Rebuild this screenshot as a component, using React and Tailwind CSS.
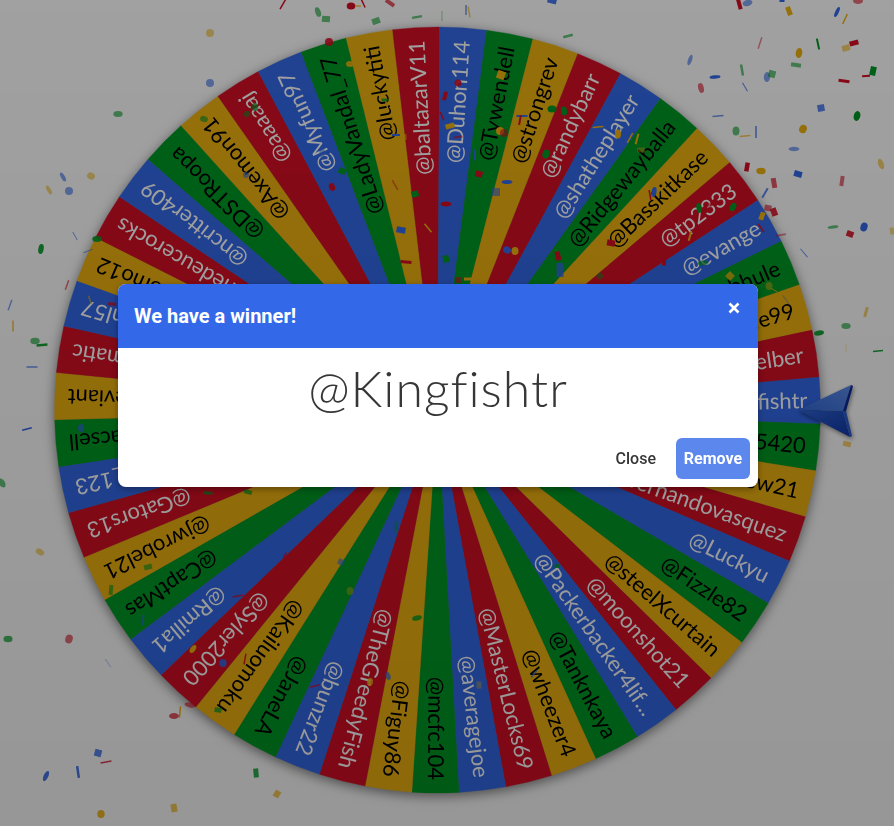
const CX = 437.5;
const CY = 410;
const R = 383;
const NAMES = [
  "@Kingfishtr", "@chrism5420", "@matthew21", "@fernandovasquez", "@Luckyu", "@Fizzle82", "@steelXcurtain", "@moonshot21",
  "@Packerbacker4lif...", "@Tanknkaya", "@wheezer4", "@MasterLocks69", "@averagejoe", "@mcfc104", "@Figuy86", "@TheGreedyFish",
  "@bunzr22", "@JaneLA", "@Kailuomoku", "@Syler2000", "@Rmilla1", "@CaptMas", "@jwrobel21", "@Gators13",
  "@david_123", "@jamiacsell", "@thedeviant", "@dramatic", "@quinnl57", "@tomo12", "@thedeucerocks", "@ncritter409",
  "@DSTRoopa", "@Axemon91", "@aaaaaj", "@Myfun97", "@LadyVandal_77", "@luckytiti", "@baltazarV11", "@Duhon114",
  "@Tywendell", "@strongrev", "@randybarr", "@shatheplayer", "@Ridgewayballa", "@Basskitkase", "@tp2333", "@evange",
  "@bhule", "@jamie99", "@weelber",
];
const COL = { b: "#3369e8", g: "#009925", y: "#eeb211", r: "#d50f25" };
const CYCLE = ["b", "g", "y", "r"];
const STEP = 360 / NAMES.length;
const START = -4.98;

function pt(a, r) {
  const t = (a * Math.PI) / 180;
  return [CX + r * Math.cos(t), CY + r * Math.sin(t)];
}

const BITS = [
  ["r",739,3,4,13,-15,"r",1],["e",747.5,3,5,3,-15,"b",.6],["r",782,0,5,4,0,"b",1],["r",789,11,5,9,-20,"y",1],["e",837,12,1.8,5.5,25,"b",1],
  ["r",845,19,1.5,11,25,"y",1],["e",858,1,5,3,0,"r",.6],["r",760,43,1.5,12,18,"r",.5],["r",818,44,2,11,-12,"g",1],["r",854,43,9,5,-15,"r",1],
  ["r",846,48,8,6,-15,"y",.6],["e",799,53,3.3,5,10,"y",1],["e",690,60,2,5.5,20,"b",.6],["r",796,65,10,4,8,"g",.6],["r",873,71,6,9,12,"g",1],
  ["r",866,76,8,2,-5,"r",1],["r",844,81,11,3,8,"r",1],["e",715,77,5.5,1.7,-5,"b",1],["r",742,70,2.5,11,-10,"g",.6],["e",767,77,3.2,5,5,"b",.6],
  ["r",772,74,7,7,15,"g",.6],["r",745,87,1,10,-30,"b",.8],["e",701,88,2.8,5,-15,"r",.6],["r",821,108,7,7,-10,"b",.8],["e",857,116,3.3,5,15,"g",1],
  ["r",718,116,1.5,11,85,"b",.7],["e",736,131,3.5,4.5,0,"g",.6],["r",745,136,1.5,11,85,"y",.7],["r",756,132,2,12,0,"b",.6],["e",803,129,3.8,4.3,20,"y",1],
  ["e",794,149,5.5,2.2,0,"b",.6],["e",881,164,2.8,5.5,-20,"y",.6],["r",747,167,4.5,9,10,"r",1],["e",761,171,4.7,3.3,0,"y",1],["r",798,174,8,6,15,"b",1],
  ["r",842,181,4,10,8,"r",.6],["r",774,183,5,10,-10,"r",.7],["r",765,193,2,11,30,"b",.8],["r",768,208,7,6,10,"r",.6],["r",774,212,6,8,-20,"r",.9],
  ["r",762,216,5,8,20,"y",1],["e",833,227,5.5,1.6,-8,"g",.6],["e",864,227,3.5,4.5,20,"b",1],["r",850,234,7,6,20,"r",.9],["r",892,231,4,7,-10,"y",.5],
  ["r",781,235,2,10,80,"r",.5],["r",804,253,1,11,-40,"b",.7],["e",733,207,3,4.5,30,"g",1],["e",699,208,2.5,5,-10,"g",1],["r",690,236,2,10,15,"y",1],
  ["e",703,263,5,2.5,-5,"g",.7],["r",708,207,5,8,40,"r",.5],["r",761,228,1.5,10,-35,"r",1],
  ["r",283,4,1.5,12,30,"r",1],["e",351,6,4.3,3.5,0,"r",1],["r",358,6,6,2,5,"y",.6],["r",363,3,1.5,10,-25,"r",1],["r",390,3,10,4,35,"r",.7],
  ["e",318,12,2.7,5,-20,"g",.6],["r",326,19,8,6,5,"g",.6],["r",376,21,8,6,-20,"g",.6],["r",417,17,10,2.5,-10,"g",.6],["r",442,16,1,10,0,"g",.4],
  ["r",466,10,1.5,10,0,"b",.7],["r",469,12,1.5,11,-10,"y",.7],["r",552,1,9,5,15,"b",.9],["r",568,36,10,2.5,-15,"g",.6],["e",210,33,4,4,0,"y",.55],["e",329,42,4,4,0,"r",.9],
  ["e",210,83,4,4,0,"b",.6],["e",118,114,4.7,3,0,"g",.6],["e",63,177,2,5,-30,"b",.6],["e",91,176,4,3.5,30,"y",.55],["e",69,191,4,4,0,"b",.6],
  ["e",49,190,2,5,-30,"y",.55],["r",75,236,1,9,-30,"b",.6],["r",88,251,1,10,70,"b",.6],["e",97,239,4.7,3,0,"g",.9],["r",67,285,1.5,10,20,"r",.6],
  ["e",41,249,2.7,5,10,"g",.9],["r",10,305,1.5,11,20,"b",.6],["r",13,326,2,11,0,"y",.6],["e",35,341,4.7,3.3,0,"g",.6],["r",42,345,2.5,11,85,"g",.9],
  ["r",32,367,1.5,11,90,"b",.7],["r",27,429,1.5,10,75,"b",1],["e",2,483,3,5,-30,"g",.6],
  ["e",40,552,4.5,3,30,"y",.55],["e",8,639,4.5,3.3,0,"g",.7],["e",69,639,3.7,4.5,20,"r",.6],["r",108,663,1,10,-35,"b",.3],["e",174,716,5,3,0,"r",.7],
  ["r",180,712,1.5,11,5,"y",1],["e",190,705,5.5,2.5,10,"r",.6],["r",98,753,7,7,15,"b",.8],["r",106,762,1.5,11,80,"r",.8],["e",46,776,2.3,5.5,25,"b",.9],
  ["r",78,772,2.5,12,-8,"b",.9],["r",256,773,5,9,-5,"g",.8],["r",277,794,6,7,30,"y",.7],["r",174,808,6,8,-10,"y",.7],["e",101,814,3.7,4,0,"y",.9],
  ["e",193,649,2.5,4.5,35,"y",1],["e",223,663,3.7,4,0,"b",.9],["r",245,659,1.5,11,10,"r",.9],["r",218,710,7,5,10,"g",.7],["r",143,620,2,10,5,"b",.7],
  ["r",111,590,4,10,5,"g",.6],["r",148,567,8,5,-15,"g",.6],["r",238,596,1.5,11,80,"r",.8],["r",285,555,1.5,6,30,"r",.8],
  ["r",866,312,3,10,15,"y",.6],["e",846,326,4.7,3,0,"g",.6],["e",819,333,5,2.5,-8,"g",.9],["r",878,351,1.5,10,85,"g",.9],["r",846,348,1,9,0,"y",.3],
  ["r",847,444,8,5,15,"y",.6],["e",769,286,3.5,4,0,"y",.5],["r",730,276,7,7,45,"y",.8],["r",786,300,1,11,-35,"b",.5],["r",774,290,1,7,-60,"y",.7],
  ["r",445,96,4,9,15,"r",1],["e",458,83,3.5,3.5,0,"r",.9],["r",501,75,8,8,20,"y",1],["r",385,100,7,3,0,"g",.8],["r",450,126,9,5,-15,"y",1],
  ["r",442,116,1.5,9,-25,"r",1],["r",458,137,9,2,-5,"r",.6],["e",500,131,4,4,0,"y",1],["e",504,133,4,4,0,"r",.6],["r",522,116,11,2,0,"b",1],
  ["r",520,120,2,10,10,"r",1],["e",552,109,4.5,3.5,0,"g",1],["e",564,111,3,4.5,-10,"g",1],["e",546,154,3.5,4.5,20,"g",1],["r",475,155,2,11,0,"b",1],
  ["e",507,182,5.5,2,0,"b",1],["r",479,174,7,6,15,"r",1],["r",496,192,8,8,0,"b",.6],["r",395,185,1.5,11,-30,"r",.5],["r",415,194,7,6,-15,"g",1],
  ["r",401,230,9,6,10,"b",1],["e",446,204,5.5,2.5,0,"r",1],["r",428,228,1.5,11,-40,"y",1],["e",507,250,4,3.5,30,"b",1],["e",515,251,3.5,4,0,"y",1],
  ["r",558,256,5,9,-15,"r",1],["r",560,270,7,14,0,"b",.8],["r",446,259,6,7,-10,"g",1],["r",406,262,11,3,5,"r",1],["r",458,280,6,6,0,"r",.6],
  ["r",468,279,8,3,0,"y",1],["r",600,276,6,6,45,"g",.5],["r",611,243,8,6,10,"r",1],["r",608,263,1.5,9,30,"y",.5],["r",630,138,1.5,11,30,"y",1],
  ["e",618,134,3,4.5,0,"y",1],["r",605,127,1.5,9,85,"b",1],["r",598,127,1.5,11,85,"y",1],["r",637,139,2,11,15,"y",1],["r",641,150,8,5,0,"y",.4],
  ["e",654,192,2.5,5,10,"b",1],["r",650,195,1.5,10,-10,"r",1],["r",664,262,4,7,0,"r",1],["r",404,137,5,6,0,"y",.6],["r",396,135,8,2,0,"b",1],
  ["r",387,106,1.5,10,-15,"y",1],["r",390,47,1.5,11,-30,"y",.5],
  ["r",557,566,5,4,0,"g",.8],["e",417,618,5,2.5,-15,"g",.8],["r",479,685,5,7,0,"y",.4],["r",534,674,1.5,9,40,"b",.7],
  ["r",341,562,6,6,20,"b",.6],["r",354,572,6,6,0,"g",.5],["e",350,591,3.5,4,0,"y",.4],["e",388,676,2.5,4,-20,"b",.7],["e",370,682,3,4,10,"y",.8],
  ["r",396,527,2.5,11,0,"g",.5],["r",315,686,1.5,10,75,"r",.8],["r",208,493,9,3,5,"g",.7],["r",248,492,8,4,15,"g",.7],
  ["e",81,428,3,4,0,"b",.7],["r",112,304,8,3,5,"r",.8],["r",90,300,1.5,9,-20,"y",.6],
  ["e",204,119,4,3,20,"g",.6],["e",255,107,3,4,0,"g",.7],["e",332,187,3,4,-20,"r",1],["r",342,171,7,6,20,"g",1],["r",254,155,6,6,45,"y",.8],
  ["e",246,175,3,3,0,"b",.6],["e",350,64,4,3,0,"y",.9],["e",247,114,3,3,0,"g",.6],["r",322,153,5,8,0,"b",.5],
];

function Bit({ d }) {
  const [t, x, y, a, b, rot, c, op] = d;
  const tf = `rotate(${rot} ${x} ${y})`;
  if (t === "e") return <ellipse cx={x} cy={y} rx={a} ry={b} transform={tf} fill={COL[c]} opacity={op} />;
  return <rect x={x - a / 2} y={y - b / 2} width={a} height={b} transform={tf} fill={COL[c]} opacity={op} />;
}

function Wheel() {
  return (
    <svg
      viewBox="55 27 766 766"
      className="block w-[766px] h-[766px] overflow-visible drop-shadow-[0_3px_6px_rgba(0,0,0,0.5)]"
    >
      {NAMES.map((n, i) => {
        const k = CYCLE[(i >= 29 ? i + 1 : i) % 4];
        const a = START + i * STEP;
        const [x1, y1] = pt(a, R);
        const [x2, y2] = pt(a + STEP, R);
        return (
          <path key={n} d={`M${CX} ${CY}L${x1} ${y1}A${R} ${R} 0 0 1 ${x2} ${y2}Z`} fill={COL[k]} stroke={COL[k]} strokeWidth="0.3" />
        );
      })}
      {NAMES.map((n, i) => {
        const k = CYCLE[(i >= 29 ? i + 1 : i) % 4];
        const mid = START + (i + 0.5) * STEP;
        return (
          <text
            key={n}
            x={CX + 370}
            y={CY + 7.5}
            transform={`rotate(${mid} ${CX} ${CY})`}
            textAnchor="end"
            fontSize="22"
            fill={k === "b" || k === "r" ? "#ffffff" : "#000000"}
            className="font-['Lato',sans-serif]"
          >
            {n}
          </text>
        );
      })}
    </svg>
  );
}

function Pointer() {
  return (
    <svg
      viewBox="796 382 60 58"
      className="absolute left-[796px] top-[382px] w-[60px] h-[58px] drop-shadow-[1px_2px_2px_rgba(0,0,0,0.45)]"
    >
      <defs>
        <linearGradient id="pu" x1="0" y1="1" x2="1" y2="0">
          <stop offset="0" stopColor="#3369d8" />
          <stop offset="1" stopColor="#5d8ce8" />
        </linearGradient>
        <linearGradient id="pl" x1="0" y1="0" x2="1" y2="1">
          <stop offset="0" stopColor="#2f63d4" />
          <stop offset="1" stopColor="#1238a8" />
        </linearGradient>
      </defs>
      <polygon points="798,410 851,385 843,411" fill="url(#pu)" />
      <polygon points="798,410 843,411 850,437" fill="url(#pl)" />
      <polygon points="851,385 853,386 846,411 843,411" fill="#0a2a9c" />
      <polygon points="843,411 846,411 852,436 850,437" fill="#2a5cd0" />
    </svg>
  );
}

export default function App() {
  return (
    <div className="relative w-[894px] h-[826px] overflow-hidden bg-white font-['Roboto',sans-serif]">
      <div className="pl-[55px] pt-[27px]">
        <Wheel />
      </div>
      <Pointer />
      <svg viewBox="0 0 894 826" className="absolute inset-0 w-[894px] h-[826px]">
        {BITS.map((d, i) => (
          <Bit key={i} d={d} />
        ))}
      </svg>
      <div className="absolute inset-0 backdrop-blur-[0.6px] bg-linear-to-b from-black/[0.37] to-black/[0.41]" />
      <div className="absolute left-[118px] top-[284px] w-[640px] h-[203px] flex flex-col rounded-lg overflow-hidden bg-white shadow-[0_2px_6px_rgba(0,0,0,0.35)]">
        <header className="relative h-16 shrink-0 flex items-center px-4 bg-[#3369e8]">
          <h2 className="text-xl font-bold leading-none text-white">We have a winner!</h2>
          <svg viewBox="0 0 12 12" className="absolute right-[18px] top-[18px] w-3 h-3">
            <path d="M1.5 1.5L10.5 10.5M10.5 1.5L1.5 10.5" stroke="#fff" strokeWidth="2.6" />
          </svg>
        </header>
        <div className="flex-1 flex justify-center pt-[10px]">
          <span className="text-[50px] leading-[60px] tracking-[1px] font-light text-[#363636] font-['Lato',sans-serif]">@Kingfishtr</span>
        </div>
        <footer className="flex items-center justify-end gap-5 pr-2 pb-2">
          <span className="text-base font-medium text-[#363636]">Close</span>
          <button className="w-[74px] h-[41px] rounded-md bg-[#5c87ed] text-base font-bold text-white">Remove</button>
        </footer>
      </div>
    </div>
  );
}
